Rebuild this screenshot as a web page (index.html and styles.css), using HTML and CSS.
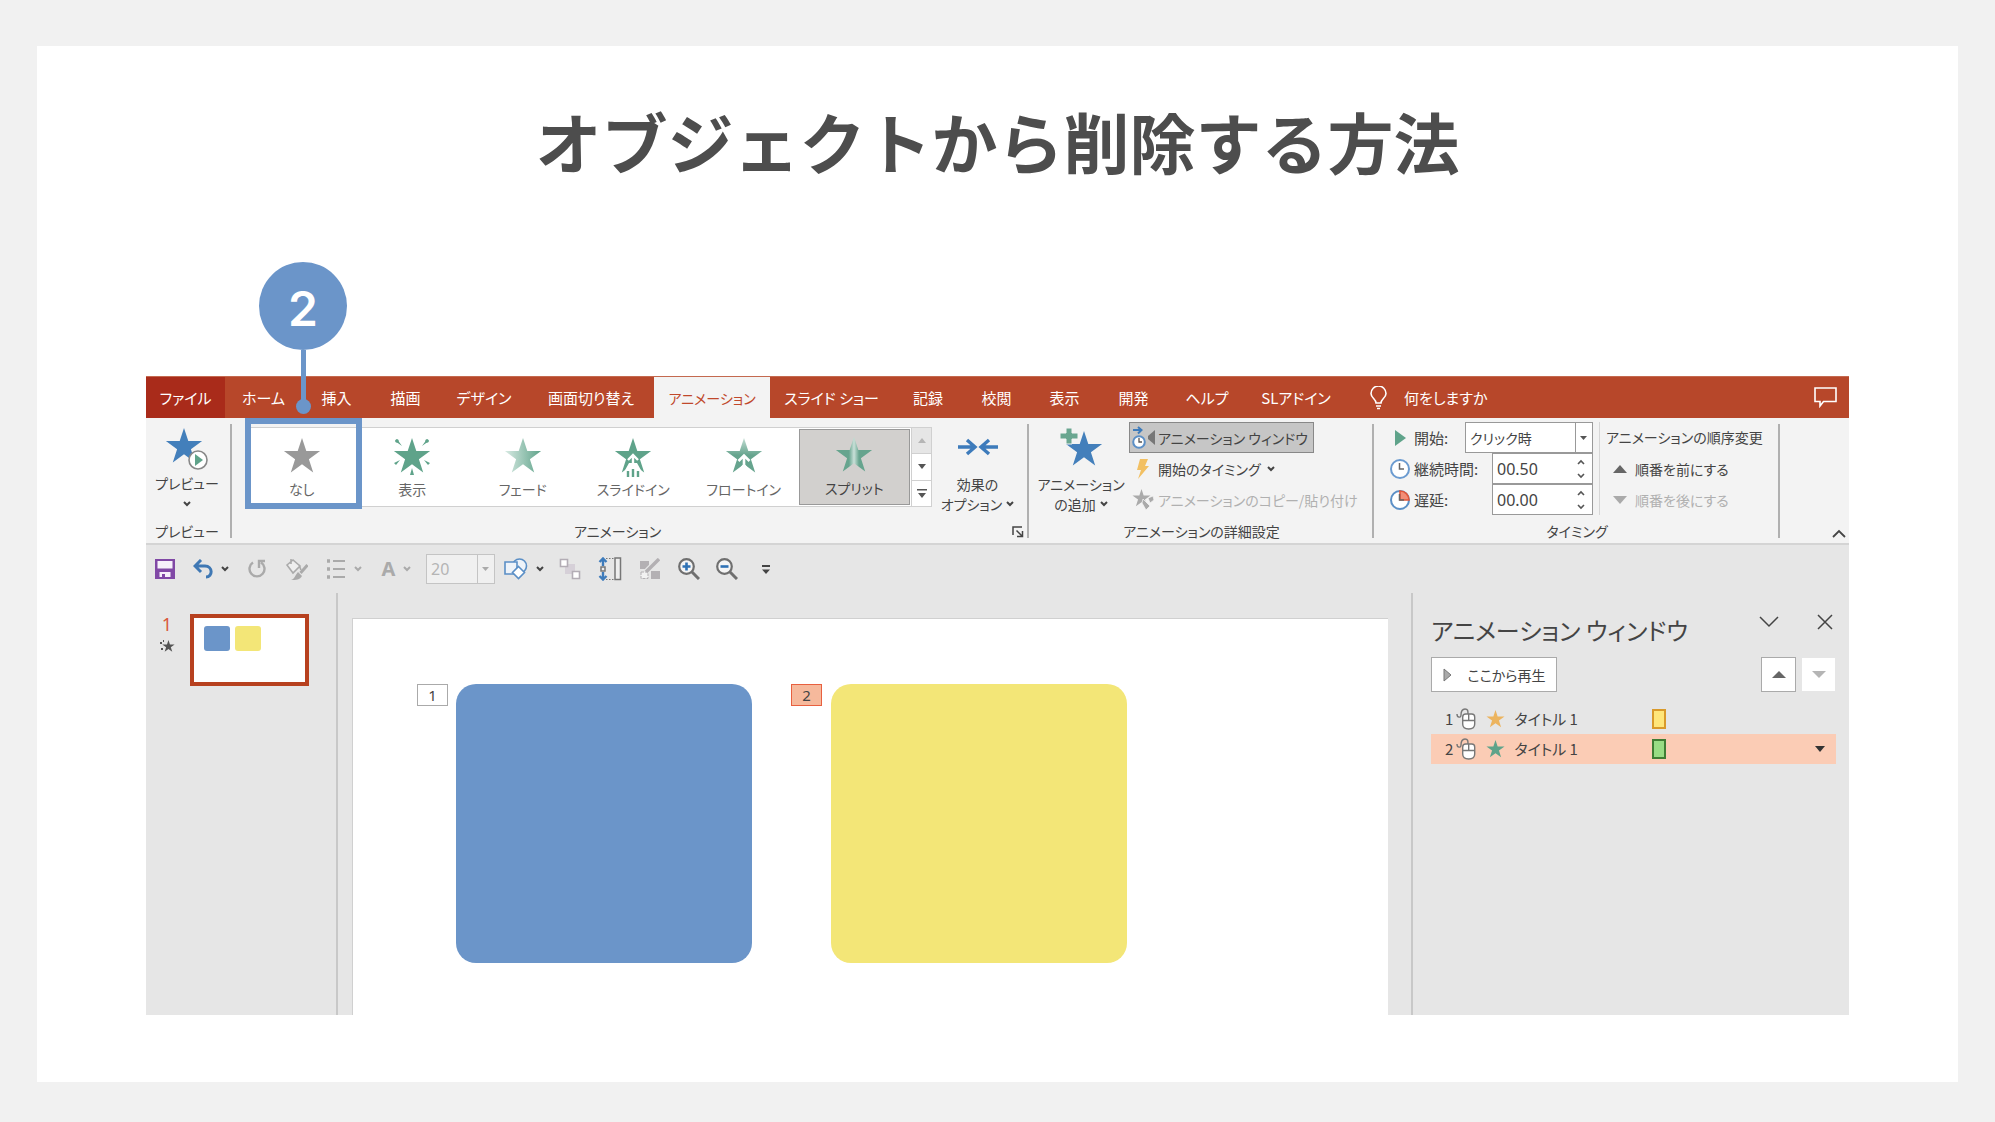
FILE: index.html
```html
<!DOCTYPE html>
<html lang="ja">
<head>
<meta charset="utf-8">
<title>オブジェクトから削除する方法</title>
<meta name="viewport" content="width=device-width, initial-scale=1">
<link rel="stylesheet" href="styles.css">
</head>
<body>
<svg class="defs" width="0" height="0" aria-hidden="true">
  <defs>
    <path id="star" d="M19 0l4.3 13.1h13.8l-11.2 8.1 4.3 13.2L19 26.3 7.8 34.4l4.3-13.2L.9 13.1h13.8z"/>
    <path id="chev" d="M1 1l3 3 3-3" fill="none" stroke-width="2"/>
    <linearGradient id="fade"><stop offset="0" stop-color="#d8eae3"/><stop offset="1" stop-color="#5fa38a"/></linearGradient>
    <linearGradient id="float" x2="0" y2="1"><stop offset="0" stop-color="#c2ddd3"/><stop offset=".5" stop-color="#66a48e"/></linearGradient>
    <linearGradient id="split"><stop offset=".36" stop-color="#66a48e"/><stop offset=".5" stop-color="#c9e0d8"/><stop offset=".64" stop-color="#66a48e"/></linearGradient>
    <g id="mouse" fill="none" stroke="#777" stroke-width="1.4">
      <path d="M1 6c0 4 4 4 4 1s1-6 4-6 3 2 3 5"/>
      <path d="M6.700 9q0-3 3-3h6q3 0 3 3v7q0 5-6 5t-6-5zM6.700 12.500h12M12.700 6v6.500" fill="#fff"/>
    </g>
  </defs>
</svg>
<main class="frame">
  <h1 class="heading">オブジェクトから削除する方法</h1>
  <section class="app">
    <nav class="tabs">
      <a class="tab tab-file" href="#">ファイル</a>
      <a class="tab" href="#">ホーム</a>
      <a class="tab" href="#">挿入</a>
      <a class="tab" href="#">描画</a>
      <a class="tab" href="#">デザイン</a>
      <a class="tab" href="#">画面切り替え</a>
      <a class="tab tab-active" href="#">アニメーション</a>
      <a class="tab" href="#">スライド ショー</a>
      <a class="tab" href="#">記録</a>
      <a class="tab" href="#">校閲</a>
      <a class="tab" href="#">表示</a>
      <a class="tab" href="#">開発</a>
      <a class="tab" href="#">ヘルプ</a>
      <a class="tab" href="#">SLアドイン</a>
      <a class="tell" href="#">
        <svg width="18" height="24" viewBox="0 0 18 24" fill="none" stroke="#fff" stroke-width="1.6"><path d="M6 17c0-4-5-5-5-9.500a7.500 7.500 0 0 1 15 0C16 12 11 13 11 17zM6 20h5M7 22.500h3"/></svg>
        何をしますか
      </a>
      <button class="comment" aria-label="コメント"><svg width="24" height="21" viewBox="0 0 24 21" fill="none" stroke="#fff" stroke-width="1.6"><path d="M1 1h21v13.500H9.500L6 19v-4.500H1z"/></svg></button>
    </nav>

    <div class="ribbon">
      <div class="group group-preview">
        <button class="big">
          <svg width="44" height="42" viewBox="0 0 44 42"><use href="#star" fill="#437fbb"/><circle cx="33" cy="32" r="9" fill="#fff" stroke="#888" stroke-width="1.600"/><path d="M30 26l8 6-8 6z" fill="#5fa38a"/></svg>
          <span>プレビュー</span>
          <svg class="chev" width="8" height="6" viewBox="0 0 8 6"><use href="#chev"/></svg>
        </button>
        <div class="caption">プレビュー</div>
      </div>

      <div class="group group-anim">
        <div class="anim-row">
          <div class="gallery">
            <button class="effect marked">
              <svg width="38" height="40" viewBox="0 0 38 40"><use href="#star" fill="#999"/></svg>なし</button>
            <button class="effect">
              <svg width="38" height="40" viewBox="0 0 38 40" fill="#5fa38a"><use href="#star"/><path d="M2 3l2-2 5 7zM36 3l-2-2-5 7zM1 25l6-3-4 5zM37 25l-6-3 4 5zM19 30l2 7h-4z"/><circle cx="4" cy="3" r="1.800"/><circle cx="34" cy="3" r="1.800"/></svg>表示</button>
            <button class="effect">
              <svg width="38" height="40" viewBox="0 0 38 40"><use href="#star" fill="url(#fade)"/></svg>フェード</button>
            <button class="effect">
              <svg width="38" height="40" viewBox="0 0 38 40"><use href="#star" fill="#5fa38a"/><path d="M10 34l5-9h8l5 9-9-6z" fill="#fff"/><path d="M14 22l5-5 5 5M19 18v10" fill="none" stroke="#fff" stroke-width="2.400"/><path d="M14 33v6M19 31v8M24 33v6" stroke="#5fa38a" stroke-width="2.400"/></svg>スライドイン</button>
            <button class="effect">
              <svg width="38" height="40" viewBox="0 0 38 40"><use href="#star" fill="url(#float)"/><path d="M13.500 23l5.500-5.500 5.500 5.500M19 19v8l-4 5M19 27l4 5" fill="none" stroke="#fff" stroke-width="2.600"/></svg>フロートイン</button>
            <button class="effect selected">
              <svg width="38" height="40" viewBox="0 0 38 40"><use href="#star" fill="url(#split)"/></svg>スプリット</button>
            <div class="scroller">
              <button class="off" aria-label="上へ"><svg width="8" height="5"><path d="M0 5l4-5 4 5z" fill="#b5b5b5"/></svg></button>
              <button aria-label="下へ"><svg width="8" height="5"><path d="M0 0l4 5 4-5z" fill="#555"/></svg></button>
              <button aria-label="その他"><svg width="10" height="9"><path d="M0 0h10v1.500H0zM1 4l4 5 4-5z" fill="#555"/></svg></button>
            </div>
          </div>
          <button class="big options">
            <svg width="42" height="18" viewBox="0 0 42 18" fill="none" stroke="#3d7bbb" stroke-width="3.400"><path d="M1 9h16M10 2l8 7-8 7M41 9H25M32 2l-8 7 8 7"/></svg>
            <span>効果の</span>
            <span>オプション <svg class="chev" width="8" height="6" viewBox="0 0 8 6"><use href="#chev"/></svg></span>
          </button>
        </div>
        <div class="caption">アニメーション</div>
        <button class="launcher" aria-label="詳細"><svg width="12" height="12" fill="none" stroke="#444" stroke-width="1.500"><path d="M1 9V1h9M4.500 4.500L10 10M10.500 5v5.500H5"/></svg></button>
      </div>

      <div class="group group-adv">
        <div class="adv-row">
          <button class="big add">
            <svg width="44" height="42" viewBox="0 0 44 42"><g transform="translate(6 4)"><use href="#star" fill="#437fbb"/></g><path d="M7 1h6v5h6v6h-6v5H7v-5H1V6h6z" fill="#6aa690" stroke="#f3f3f3"/></svg>
            <span>アニメーション</span>
            <span>の追加 <svg class="chev" width="8" height="6" viewBox="0 0 8 6"><use href="#chev"/></svg></span>
          </button>
          <div class="stack">
            <button class="line pressed">
              <svg width="24" height="24" viewBox="0 0 24 24"><path d="M1 4h8M6 1l3.500 3L6 7.500" fill="none" stroke="#3d7bbb" stroke-width="2"/><circle cx="7" cy="16" r="5.800" fill="#fff" stroke="#5b8fc6" stroke-width="2"/><path d="M7 12v4h3" fill="none" stroke="#555" stroke-width="1.300"/><path d="M23 4v15l-7-6v-3z" fill="#777"/></svg>
              アニメーション ウィンドウ</button>
            <button class="line">
              <svg width="24" height="24" viewBox="0 0 24 24"><path d="M8 2h8l-3 7h4L6 22l3-9H5z" fill="#f2c063"/></svg>
              開始のタイミング <svg class="chev" width="8" height="6" viewBox="0 0 8 6"><use href="#chev"/></svg></button>
            <button class="line disabled" disabled>
              <svg width="24" height="24" viewBox="0 0 24 24" fill="#aaa"><g transform="translate(0 1) scale(.5)"><use href="#star"/></g><path d="M11 11l7 7-4 4-4-7zM16 10l5-2 1 4-4 3z" stroke="#f3f3f3" stroke-width=".8"/></svg>
              アニメーションのコピー/貼り付け</button>
          </div>
        </div>
        <div class="caption">アニメーションの詳細設定</div>
      </div>

      <div class="group group-timing">
        <div class="timing-row">
          <div class="fields">
            <div class="field">
              <svg width="20" height="22" viewBox="0 0 20 22"><path d="M5 3l11 8-11 8z" fill="#5fa38a"/></svg>
              <label for="start">開始:</label>
              <span class="combo start"><select id="start"><option>クリック時</option></select><span class="drop"><svg width="8" height="4"><path d="M0 0h7L3.500 4z" fill="#555"/></svg></span></span>
            </div>
            <div class="field">
              <svg width="20" height="22" viewBox="0 0 20 22" fill="none"><circle cx="10" cy="11" r="9" fill="#fff" stroke="#6b9bd0" stroke-width="2"/><path d="M9.500 5v6H14" stroke="#666" stroke-width="1.500"/></svg>
              <label for="dur">継続時間:</label>
              <span class="combo spin"><input id="dur" type="text" value="00.50"><svg width="8" height="20" viewBox="0 0 8 20" fill="none" stroke="#555" stroke-width="1.600"><path d="M1 5l3-3 3 3M1 15l3 3 3-3"/></svg></span>
            </div>
            <div class="field">
              <svg width="20" height="22" viewBox="0 0 20 22" fill="none"><circle cx="10" cy="11" r="9" fill="#fff" stroke="#5b8fc6" stroke-width="2"/><path d="M10 2a9 9 0 0 1 9 9h-9z" fill="#f28d77" stroke="#e0573b" stroke-width="1.600"/><path d="M9.500 5v6H14" stroke="#666" stroke-width="1.500"/></svg>
              <label for="delay">遅延:</label>
              <span class="combo spin"><input id="delay" type="text" value="00.00"><svg width="8" height="20" viewBox="0 0 8 20" fill="none" stroke="#555" stroke-width="1.600"><path d="M1 5l3-3 3 3M1 15l3 3 3-3"/></svg></span>
            </div>
          </div>
          <div class="reorder">
            <div class="reorder-title">アニメーションの順序変更</div>
            <button class="line"><svg width="14" height="8"><path d="M0 8l7-8 7 8z" fill="#666"/></svg>順番を前にする</button>
            <button class="line disabled" disabled><svg width="14" height="8"><path d="M0 0l7 8 7-8z" fill="#aaa"/></svg>順番を後にする</button>
          </div>
        </div>
        <div class="caption">タイミング</div>
      </div>

      <button class="collapse" aria-label="リボンを折りたたむ"><svg width="14" height="9" fill="none" stroke="#444" stroke-width="1.800"><path d="M1 8l6-6 6 6"/></svg></button>
    </div>

    <div class="qat">
      <button class="w-s" aria-label="保存"><svg width="20" height="20" viewBox="0 0 20 20"><path d="M0 0h20v20H0z" fill="#8048a5"/><path d="M2.500 2h15v7.500h-15zM4.500 13h11v5h-11z" fill="#f6f0fa"/><path d="M7 15h3v3H7z" fill="#8048a5"/></svg></button>
      <button class="w-l" aria-label="元に戻す"><svg width="20" height="20" viewBox="0 0 20 20" fill="none" stroke="#3f78b4" stroke-width="3"><path d="M8 1L2 7l6 6M2 7h10c8 0 8 11 1 11"/></svg><svg class="chev" width="8" height="6" viewBox="0 0 8 6"><use href="#chev"/></svg></button>
      <button class="w-m" aria-label="繰り返し"><svg width="20" height="20" viewBox="0 0 20 20" fill="none" stroke="#aaa" stroke-width="2.400"><path d="M6 3.500a7.500 7.500 0 1 0 8 0M12 9V2h6"/></svg></button>
      <button class="w-m" aria-label="書式"><svg width="22" height="22" viewBox="0 0 22 22" fill="none" stroke="#aaa" stroke-width="1.600"><path d="M1 7l6-5 7 6-7 7zM5 6V1M13 7l2 5" fill="#eee"/><path d="M21.500 7l-7 8" stroke-width="3"/><path d="M12 14l4 4c-2 4-6 4-11 4 4-1 4-5 7-8z" fill="#aaa" stroke="none"/></svg></button>
      <button class="w-l" aria-label="箇条書き"><svg width="20" height="20" viewBox="0 0 20 20" stroke="#aaa" stroke-width="2"><path d="M7 2h12M7 10h12M7 18h12"/><path d="M1 2h3M1 10h3M1 18h3" stroke-width="3.400"/></svg><svg class="chev dim" width="8" height="6" viewBox="0 0 8 6"><use href="#chev"/></svg></button>
      <button class="w-l fontcolor" aria-label="フォントの色">A<svg class="chev dim" width="8" height="6" viewBox="0 0 8 6"><use href="#chev"/></svg></button>
      <span class="combo size"><select aria-label="フォント サイズ" disabled><option>20</option></select><span class="drop"><svg width="8" height="4"><path d="M0 0h7L3.500 4z" fill="#aaa"/></svg></span></span>
      <button class="w-l" aria-label="図形"><svg width="24" height="22" viewBox="0 0 24 22" fill="#eef3f9" stroke="#5b8fc6" stroke-width="1.600"><circle cx="15.500" cy="8" r="7"/><path d="M1 4h12v12H1z"/><path d="M14.500 8.500l6 6-6 6-6-6z" fill="#fff"/></svg><svg class="chev" width="8" height="6" viewBox="0 0 8 6"><use href="#chev"/></svg></button>
      <button class="w-m" aria-label="配置"><svg width="22" height="22" viewBox="0 0 22 22"><path d="M6 6h10v10H6z" fill="#d6d0d8"/><path d="M1.500 1.500h7v7h-7zM13.500 13.500h7v7h-7z" fill="#fff" stroke="#b3adb5" stroke-width="1.600"/></svg></button>
      <button class="w-m" aria-label="上下に整列"><svg width="24" height="24" viewBox="0 0 24 24" fill="none"><path d="M5 9V2M1.500 5L5 1.500 8.500 5M5 15v7M1.500 19L5 22.500 8.500 19" stroke="#3d7bbb" stroke-width="2.400"/><path d="M3 10h4v4H3zM17 1h5.500v21.500H17z" stroke="#777" stroke-width="1.500" fill="#eee"/><path d="M8 1.500h8M8 22.500h8" stroke="#777" stroke-dasharray="1.500 1.500"/></svg></button>
      <button class="w-m" aria-label="選択"><svg width="20" height="22" viewBox="0 0 20 22" fill="#b3b0b3"><path d="M0 3h9v8H0zM11 13h9v8h-9z"/><path d="M1 14h7v6.500H1z" fill="#f2f2f2" stroke="#b3b0b3" stroke-dasharray="3 1"/><path d="M19 1L6 14" stroke="#e6e6e6" stroke-width="6"/><path d="M19 1L6 14" stroke="#b3b0b3" stroke-width="3.400"/></svg></button>
      <button class="w-s" aria-label="拡大"><svg width="22" height="22" viewBox="0 0 22 22" fill="none" stroke="#6f6f6f"><circle cx="8.500" cy="8.500" r="7.300" fill="#f5f5f5" stroke-width="2.200"/><path d="M14 14l7 7" stroke-width="3"/><path d="M4.500 8.500h8M8.500 4.500v8" stroke="#2f72b5" stroke-width="2.600"/></svg></button>
      <button class="w-s" aria-label="縮小"><svg width="22" height="22" viewBox="0 0 22 22" fill="none" stroke="#6f6f6f"><circle cx="8.500" cy="8.500" r="7.300" fill="#f5f5f5" stroke-width="2.200"/><path d="M14 14l7 7" stroke-width="3"/><path d="M4.500 8.500h8" stroke="#2f72b5" stroke-width="2.600"/></svg></button>
      <button class="w-m" aria-label="カスタマイズ"><svg width="8" height="9"><path d="M0 0h8v2H0zM0 4.500h8L4 9z" fill="#444"/></svg></button>
    </div>

    <div class="work">
      <aside class="thumbs">
        <div class="thumb-meta">
          <span class="thumb-no">1</span>
          <svg width="15" height="13" viewBox="0 0 15 13" fill="#555"><g transform="translate(2) scale(.34)"><use href="#star"/></g><path d="M0 2h2v2H0zM1 8h2v2H1zM3 0h1v2H3z"/></svg>
        </div>
        <button class="thumb" aria-label="スライド 1"><span class="mini blue"></span><span class="mini yellow"></span></button>
      </aside>
      <div class="canvas">
        <div class="slide">
          <span class="tag">1</span>
          <div class="shape blue"></div>
          <span class="tag tag-on">2</span>
          <div class="shape yellow"></div>
        </div>
      </div>
      <aside class="pane">
        <header class="pane-head">
          <h2>アニメーション ウィンドウ</h2>
          <button aria-label="オプション"><svg width="20" height="12" fill="none" stroke="#444" stroke-width="1.500"><path d="M1 1l9 9 9-9"/></svg></button>
          <button aria-label="閉じる"><svg width="16" height="16" fill="none" stroke="#444" stroke-width="1.500"><path d="M1 1l14 14M15 1L1 15"/></svg></button>
        </header>
        <div class="pane-tools">
          <button class="play"><svg width="9" height="14"><path d="M1 1l7 6-7 6z" fill="#aaa" stroke="#777"/></svg>ここから再生</button>
          <button class="move" aria-label="上へ移動"><svg width="14" height="7"><path d="M0 7l7-7 7 7z" fill="#666"/></svg></button>
          <button class="move move-off" aria-label="下へ移動" disabled><svg width="14" height="7"><path d="M0 0l7 7 7-7z" fill="#b5b5b5"/></svg></button>
        </div>
        <ol class="items">
          <li class="item"><span>1</span><svg class="m" width="20" height="22"><use href="#mouse"/></svg><svg width="19" height="18" viewBox="0 0 38 36"><use href="#star" fill="#ecb45f"/></svg><span class="name">タイトル 1</span><i class="bar bar-y"></i></li>
          <li class="item item-on"><span>2</span><svg class="m" width="20" height="22"><use href="#mouse"/></svg><svg width="19" height="18" viewBox="0 0 38 36"><use href="#star" fill="#5fa38a"/></svg><span class="name">タイトル 1</span><i class="bar bar-g"></i><svg class="more" width="10" height="6"><path d="M0 0h10L5 6z" fill="#333"/></svg></li>
        </ol>
      </aside>
    </div>

    <div class="callout"><span class="bubble">2</span><span class="stem"></span><span class="dot"></span></div>
  </section>
</main>
</body>
</html>
```

FILE: styles.css
```css
* { box-sizing: border-box; }

body {
  margin: 0;
  min-height: 100vh;
  display: flex;
  padding: 46px 37px 40px;
  background: #f1f1f1;
  color: #444;
  font-family: "Noto Sans CJK JP", sans-serif;
  font-feature-settings: "palt";
  font-size: 14px;
  line-height: 20px;
}

.defs { position: absolute; }

button, select, input {
  font: inherit;
  font-feature-settings: inherit;
  color: inherit;
  margin: 0;
  padding: 0;
  border: 0;
  border-radius: 0;
  background: none;
}

button { display: flex; align-items: center; justify-content: center; white-space: nowrap; }
svg { flex: none; display: block; }
a { color: inherit; text-decoration: none; }

.frame {
  flex: 1;
  min-width: 0;
  background: #fff;
  padding: 50px 109px 67px;
  display: flex;
  flex-direction: column;
}

.heading {
  margin: 0 0 192px;
  font-size: 66px;
  line-height: 88px;
  font-weight: 700;
  font-feature-settings: normal;
  text-align: center;
  color: #4d4d4d;
}

.app { position: relative; flex: 1; display: flex; flex-direction: column; background: #e6e6e6; }

/* tabs */
.tabs {
  display: grid;
  grid-template-columns: 79px 77px 69px 69px 88px 126px 116px 123px 70px 67px 69px 69px 78px 100px 1fr 46px;
  height: 42px;
  background: #b7472a;
  border-top: 1px solid #c4694f;
  color: #fff;
  font-size: 15px;
}
.tab { display: flex; align-items: center; justify-content: center; white-space: nowrap; }
.tab-file { background: #a92b1a; }
.tab-active { background: #f3f3f3; color: #c0482b; font-size: 14px; }
.tell { display: flex; align-items: center; gap: 16px; padding-left: 24px; }

/* ribbon */
.ribbon { display: flex; height: 127px; background: #f3f3f3; border-bottom: 2px solid #d4d4d4; position: relative; }
.group { position: relative; display: flex; flex-direction: column; justify-content: space-between; padding: 0 0 2px; }
.group::after { content: ""; position: absolute; right: 0; top: 6px; bottom: 5px; width: 2px; background: #b0b0b0; }
.group-preview { width: 86px; }
.group-anim { width: 797px; }
.group-adv { width: 345px; }
.group-timing { width: 406px; }
.caption { text-align: center; }
.group-anim .caption { padding-right: 26px; }

.big { flex-direction: column; justify-content: flex-start; }
.big span { display: flex; align-items: center; gap: 4px; }
.chev { stroke: #444; fill: none; }
.dim { stroke: #aaa; }

.group-preview .big { padding: 10px 4px 0 0; }
.group-preview .big span { margin: 3px 0 8px; }
.group-preview .caption { padding-right: 4px; }

.anim-row { display: flex; }
.gallery { display: flex; width: 687px; height: 80px; margin: 9px 0 0 13px; background: #fff; border: 1px solid #d0d0d0; }
.effect { position: relative; flex: 1; flex-direction: column; color: #666; gap: 1px; padding: 2px 0 0 1px; }
.selected { background: #d2d0ce; border: 1px solid #999; margin: 1px 0; color: #444; padding: 0; }
.marked::after { content: ""; position: absolute; inset: -10px -5px -3px -1px; border: 6px solid #6b95c9; }
.scroller { display: flex; flex-direction: column; width: 20px; margin-left: 1px; border-left: 1px solid #d0d0d0; }
.scroller button { flex: 1; border-bottom: 1px solid #d0d0d0; }
.scroller button:last-child { border: 0; }
.scroller .off { background: #e6e6e6; }

.options { flex: 1; padding: 20px 6px 0 0; }
.options > svg { margin-bottom: 18px; }
.launcher { position: absolute; right: 5px; bottom: 5px; }

.adv-row { display: flex; padding-left: 4px; }
.add { width: 96px; padding-top: 9px; }
.add > svg { margin-bottom: 5px; }
.stack { display: flex; flex-direction: column; align-items: flex-start; padding-top: 4px; }
.line { height: 31px; gap: 2px; padding: 0 8px 0 3px; }
.line .chev { margin-left: 4px; }
.pressed { background: #c6c6c6; border: 1px solid #888; padding: 0 5px 0 2px; }
.disabled { color: #b0b0b0; }

.timing-row { display: flex; padding: 4px 0 0 16px; }
.fields { width: 203px; }
.field { display: flex; align-items: center; height: 31px; gap: 4px; }
.field label { white-space: nowrap; font-size: 15px; }
.combo { display: flex; align-items: center; height: 31px; border: 1px solid #999; background: #fff; margin-left: auto; }
.combo select { appearance: none; flex: 1; min-width: 0; height: 100%; padding-left: 4px; opacity: 1; }
.drop { display: flex; align-items: center; justify-content: center; width: 17px; height: 100%; border-left: 1px solid #999; pointer-events: none; }
.start { width: 128px; }
.spin { width: 101px; padding-right: 7px; }
.spin input { flex: 1; min-width: 0; height: 100%; padding-left: 4px; font-family: "Noto Sans", sans-serif; font-size: 16px; }
.reorder { margin-left: 6px; padding-left: 6px; border-left: 1px solid #d6d6d6; white-space: nowrap; }
.reorder-title { height: 31px; line-height: 31px; }
.reorder .line { padding: 0 0 0 7px; gap: 8px; }

.collapse { position: absolute; right: 3px; bottom: 5px; }

/* quick access bar */
.qat { display: flex; align-items: center; height: 48px; }
.qat button { height: 31px; }
.w-s { width: 38px; }
.w-m { width: 40px; }
.w-l { width: 53px; gap: 8px; }
.fontcolor { color: #aaa; font: 700 20px/24px "Noto Sans", sans-serif; }
.qat .size { width: 69px; height: 30px; margin: 0 2px 0 3px; background: #f0f0f0; border-color: #c4c4c4; color: #b5b5b5; font: 16px "Noto Sans", sans-serif; }
.size .drop { border-color: #c4c4c4; }

/* work area */
.work { flex: 1; display: flex; min-height: 420px; }
.thumbs { display: flex; width: 192px; padding: 21px 0 0 13px; border-right: 2px solid #c8c8c8; }
.thumb-meta { display: flex; flex-direction: column; align-items: center; width: 16px; gap: 6px; }
.thumb-no { color: #d9583b; font: 18px/20px "Noto Sans", sans-serif; }
.thumb { width: 119px; height: 72px; margin-left: 15px; padding: 8px 10px; border: 4px solid #b7411f; background: #fff; align-items: flex-start; justify-content: flex-start; gap: 5px; }
.mini { width: 26px; height: 25px; border-radius: 3px; }
.blue { background: #6b95c9; }
.yellow { background: #f3e677; }

.canvas { flex: 1; display: flex; padding: 25px 23px 0 14px; }
.slide { flex: 1; display: flex; align-items: flex-start; background: #fff; border: 1px solid #d0d0d0; border-width: 1px 0 0 1px; padding: 65px 0 50px 64px; }
.tag { display: block; width: 31px; height: 22px; border: 1px solid #aaa; text-align: center; margin-right: 8px; font: 15px/20px "Noto Sans", sans-serif; }
.tag-on { background: #f6b99c; border: 1px solid #e8603f; margin-left: 39px; margin-right: 9px; }
.shape { width: 296px; height: 279px; border-radius: 20px; }

.pane { width: 438px; padding: 20px 13px 0 18px; border-left: 2px solid #c8c8c8; }
.pane-head { display: flex; height: 30px; gap: 38px; padding-right: 3px; }
.pane-head h2 { flex: 1; margin: 0; font-size: 24px; line-height: 34px; font-weight: 400; white-space: nowrap; }
.pane-head button { height: 18px; }
.pane-tools { display: flex; gap: 5px; margin: 14px 0 12px; }
.play { width: 126px; height: 35px; gap: 16px; background: #fff; border: 1px solid #aaa; margin-right: auto; }
.move { width: 35px; height: 35px; background: #fff; border: 1px solid #aaa; }
.move-off { border-color: #e6e6e6; }
.items { list-style: none; margin: 0; padding: 0; }
.item { display: flex; align-items: center; height: 30px; padding: 0 11px 0 14px; font-size: 15px; }
.item-on { background: #fbccb5; }
.m { margin: 0 10px 0 3px; }
.name { width: 138px; margin-left: 9px; }
.bar { width: 14px; height: 20px; border: 2px solid #d99a2b; background: #ffe67a; }
.bar-g { border-color: #3f7d34; background: #98dc84; }
.more { margin-left: auto; }

/* numbered pointer over the ribbon */
.callout { position: absolute; left: 113px; top: -114px; width: 88px; display: flex; flex-direction: column; align-items: center; }
.bubble { width: 88px; height: 88px; border-radius: 50%; background: #6b95c9; color: #fff; font: 600 48px/94px Inter, sans-serif; text-align: center; }
.stem { width: 5px; height: 50px; background: #6b95c9; }
.dot { width: 15px; height: 15px; margin-top: -1px; border-radius: 50%; background: #6b95c9; }
```
